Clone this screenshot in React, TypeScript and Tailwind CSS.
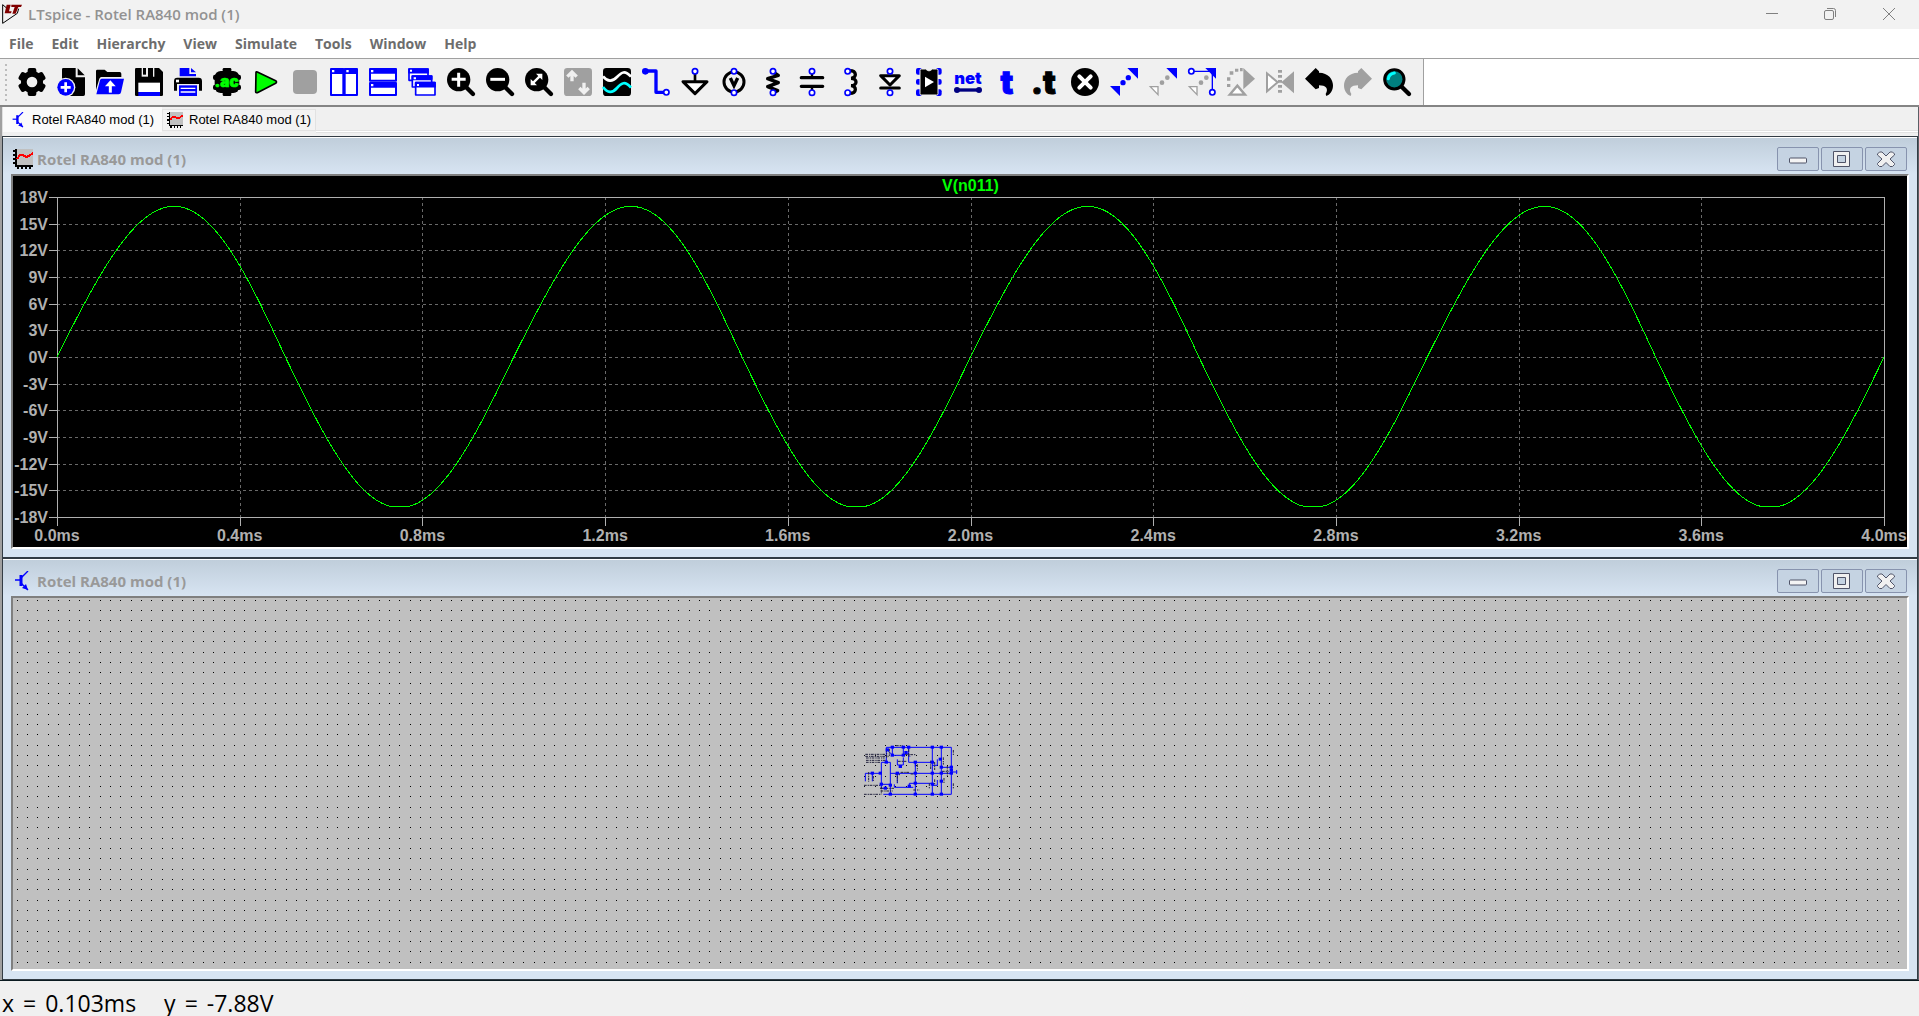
import { useLayoutEffect, useRef, useState, type ReactNode } from 'react';

const BLUE = '#0000ff';
const GRAY = '#a0a0a0';
const FACE = '#f0f0f0';

const MENUS = ['File', 'Edit', 'Hierarchy', 'View', 'Simulate', 'Tools', 'Window', 'Help'];

// tracks the pixel size of an element so drawings can be laid out 1:1
function useSize() {
    const ref = useRef<HTMLDivElement>(null);
    const [size, setSize] = useState({ w: 0, h: 0 });

    useLayoutEffect(() => {
        const el = ref.current;
        if (!el) return;
        const update = () => setSize({ w: el.clientWidth, h: el.clientHeight });
        update();
        const observer = new ResizeObserver(update);
        observer.observe(el);
        return () => observer.disconnect();
    }, []);

    return { ref, ...size };
}

function Pin({ x, y }: { x: number; y: number }) {
    return <circle cx={x} cy={y} r="8" fill="#fff" stroke={BLUE} strokeWidth="5" />;
}

function Lens({ children }: { children?: ReactNode }) {
    return (
        <>
            <path d="M54 54 L78 78" stroke="#000" strokeWidth="13" strokeLinecap="round" />
            <circle cx="35" cy="35" r="35" />
            <g stroke="#fff" strokeWidth="9" fill="none">{children}</g>
        </>
    );
}

// toolbar glyphs, all on an 84 x 84 grid
const TOOLS: { label: string; icon: ReactNode }[] = [
    {
        label: 'Settings',
        icon: (
            <>
                <circle cx="42" cy="42" r="33" />
                <rect x="29" y="0" width="26" height="84" rx="6" />
                <rect x="29" y="0" width="26" height="84" rx="6" transform="rotate(60 42 42)" />
                <rect x="29" y="0" width="26" height="84" rx="6" transform="rotate(120 42 42)" />
                <circle cx="42" cy="42" r="16" fill={FACE} />
            </>
        ),
    },
    {
        label: 'New Schematic',
        icon: (
            <>
                <path d="M19 0 H56 V28 H84 V79 Q84 84 79 84 H15 V4 Q15 0 19 0 Z" />
                <path d="M62 1 L83 22 H62 Z" />
                <circle cx="26" cy="58" r="29" fill={FACE} />
                <circle cx="26" cy="58" r="25" fill={BLUE} />
                <path d="M26 43 V73 M11 58 H41" stroke="#fff" strokeWidth="8" />
            </>
        ),
    },
    {
        label: 'Open',
        icon: (
            <>
                <path d="M4 5 H26 L34 12 H71 Q76 12 76 17 V27 H16 Q12 27 10 32 L0 66 V9 Q0 5 4 5 Z" />
                <path d="M17 32 H84 L75 73 Q74 79 68 79 H1 L12 37 Q13 32 17 32 Z" fill={BLUE} />
                <path d="M43 74 V50" stroke="#fff" strokeWidth="9" />
                <path d="M43 37 L27 55 H59 Z" fill="#fff" />
            </>
        ),
    },
    {
        label: 'Save',
        icon: (
            <>
                <path d="M4 0 H72 L84 12 V80 Q84 84 80 84 H4 Q0 84 0 80 V4 Q0 0 4 0 Z" />
                <path d="M20 0 H39 V26 H20 Z" fill={FACE} />
                <path d="M24 0 H33 V20 H24 Z" />
                <path d="M54 0 H58 V26 H54 Z" fill={FACE} />
                <path d="M10 44 H75 V72 H10 Z" fill="#fff" />
                <path d="M10 72 H75 V84 H10 Z" fill={BLUE} />
            </>
        ),
    },
    {
        label: 'Print',
        icon: (
            <>
                <path d="M17 0 H46 V18 H66 V25 H17 Z M51 0 L66 13 H51 Z" fill={BLUE} />
                <path d="M10 29 H74 Q84 29 84 39 V68 H0 V39 Q0 29 10 29 Z" />
                <rect x="6" y="35" width="9" height="8" fill="#fff" />
                <path d="M9 48 H75 V84 H9 Z" fill={FACE} />
                <path d="M15 52 H69 V84 H15 Z" fill={BLUE} />
                <path d="M20 61 H64 M20 72 H64" stroke="#fff" strokeWidth="4" />
            </>
        ),
    },
    {
        label: 'Configure Analysis',
        icon: (
            <>
                <rect x="5" y="9" width="74" height="66" rx="18" />
                <rect x="29" y="0" width="26" height="84" rx="4" />
                <rect x="0" y="20" width="84" height="16" rx="6" />
                <rect x="0" y="50" width="84" height="16" rx="6" />
                <text x="41" y="57" textAnchor="middle" fontSize="46" fontWeight="900" fill="#00ff00" stroke="#00ff00" strokeWidth="2" className="font-[Inter,sans-serif]">.ac</text>
            </>
        ),
    },
    {
        label: 'Run',
        icon: <path d="M12 13 Q12 10 16 12 L71 38 Q76 42 71 46 L16 74 Q11 75 11 71 Z" fill="#00ff00" stroke="#000" strokeWidth="5" strokeLinejoin="round" />,
    },
    { label: 'Stop', icon: <rect x="6" y="6" width="72" height="72" rx="12" fill={GRAY} /> },
    {
        label: 'Tile Vertically',
        icon: (
            <>
                <path d="M3 3 H40 V81 H3 Z M44 3 H81 V81 H44 Z" fill="#fff" stroke={BLUE} strokeWidth="6" strokeLinejoin="round" />
                <path d="M2 3 H82 V18 H2 Z" fill={BLUE} />
                <path d="M6 6 H13 V13 H6 Z M49 6 H56 V13 H49 Z" fill="#fff" />
            </>
        ),
    },
    {
        label: 'Tile Horizontally',
        icon: (
            <>
                <path d="M3 3 H81 V38 H3 Z M3 45 H81 V81 H3 Z" fill="#fff" stroke={BLUE} strokeWidth="6" strokeLinejoin="round" />
                <path d="M2 3 H82 V17 H2 Z M2 45 H82 V59 H2 Z" fill={BLUE} />
                <path d="M6 6 H13 V13 H6 Z M6 48 H13 V55 H6 Z" fill="#fff" />
            </>
        ),
    },
    {
        label: 'Cascade',
        icon: (
            <g stroke={BLUE} strokeWidth="5" fill="#fff" strokeLinejoin="round">
                <path d="M3 3 H60 V37 H3 Z" />
                <path d="M3 3 H60 V14 H3 Z" fill={BLUE} />
                <path d="M13 24 H71 V57 H13 Z" />
                <path d="M13 24 H71 V34 H13 Z" fill={BLUE} />
                <path d="M23 44 H81 V81 H23 Z" />
                <path d="M23 44 H81 V56 H23 Z" fill={BLUE} />
                <path d="M6 5 H12 V11 H6 Z M17 28 H24 V34 H17 Z M27 48 H33 V54 H27 Z" stroke="none" />
            </g>
        ),
    },
    { label: 'Zoom In', icon: <Lens><path d="M35 14 V56 M14 34 H56" /></Lens> },
    { label: 'Zoom Out', icon: <Lens><path d="M13 34 H57" /></Lens> },
    {
        label: 'Zoom to Fit',
        icon: (
            <Lens>
                <path d="M22 47 L47 22" strokeWidth="7" />
                <path d="M33 17 H52 V36 Z M17 33 V52 H36 Z" fill="#fff" stroke="none" />
            </Lens>
        ),
    },
    {
        label: 'Autorange',
        icon: (
            <>
                <rect width="84" height="84" rx="10" fill={GRAY} />
                <path d="M24 40 V14 M10 26 L24 12 L38 26 M60 44 V72 M46 60 L60 74 L74 60" stroke={FACE} strokeWidth="10" fill="none" />
            </>
        ),
    },
    {
        label: 'Waveforms',
        icon: (
            <>
                <rect width="84" height="84" rx="10" />
                <path d="M0 25 C14 42 28 42 42 27 S66 6 84 26" stroke="#fff" strokeWidth="8" fill="none" />
                <path d="M0 57 C14 76 28 76 42 60 S66 38 84 59" stroke="#00ffff" strokeWidth="8" fill="none" />
            </>
        ),
    },
    {
        label: 'Wire',
        icon: (
            <>
                <path d="M10 9 H42 V73 H66" stroke={BLUE} strokeWidth="10" fill="none" strokeLinejoin="round" />
                <circle cx="10" cy="10" r="10" fill={BLUE} />
                <Pin x={73} y={73} />
            </>
        ),
    },
    {
        label: 'Ground',
        icon: (
            <>
                <path d="M42 16 V40" stroke="#000" strokeWidth="8" />
                <path d="M6 41 H78 L42 77 Z" fill="#fff" stroke="#000" strokeWidth="9" strokeLinejoin="round" />
                <Pin x={42} y={10} />
            </>
        ),
    },
    {
        label: 'Voltage Source',
        icon: (
            <>
                <circle cx="42" cy="42" r="30" fill={FACE} stroke="#000" strokeWidth="9" />
                <path d="M31 30 L42 53 L53 30" fill="none" stroke="#000" strokeWidth="10" />
                <Pin x={42} y={10} />
                <Pin x={42} y={74} />
            </>
        ),
    },
    {
        label: 'Resistor',
        icon: (
            <>
                <path d="M42 12 L58 22 L26 32 L58 44 L26 56 L56 68 L42 74" fill="none" stroke="#000" strokeWidth="10" strokeLinejoin="round" />
                <Pin x={42} y={10} />
                <Pin x={42} y={74} />
            </>
        ),
    },
    {
        label: 'Capacitor',
        icon: (
            <>
                <path d="M10 29 H74 M10 55 H74" stroke="#000" strokeWidth="10" strokeLinecap="round" />
                <path d="M42 18 V26 M42 58 V66" stroke="#000" strokeWidth="7" />
                <Pin x={42} y={10} />
                <Pin x={42} y={74} />
            </>
        ),
    },
    {
        label: 'Inductor',
        icon: (
            <>
                <path d="M38 8 C60 8 60 30 42 31 C62 31 62 53 42 53 C60 54 60 76 38 76" fill="none" stroke="#000" strokeWidth="10" />
                <Pin x={32} y={10} />
                <Pin x={32} y={74} />
            </>
        ),
    },
    {
        label: 'Diode',
        icon: (
            <>
                <path d="M14 23 H70 L42 51 Z" fill="#fff" stroke="#000" strokeWidth="9" strokeLinejoin="round" />
                <path d="M14 60 H70" stroke="#000" strokeWidth="9" strokeLinecap="round" />
                <Pin x={42} y={10} />
                <Pin x={42} y={74} />
            </>
        ),
    },
    {
        label: 'Component',
        icon: (
            <>
                <g fill={BLUE}>
                    <rect x="3" y="0" width="18" height="20" rx="6" />
                    <rect x="62" y="0" width="18" height="20" rx="6" />
                    <rect x="3" y="33" width="18" height="17" rx="6" />
                    <rect x="62" y="33" width="18" height="17" rx="6" />
                    <rect x="3" y="64" width="18" height="20" rx="6" />
                    <rect x="62" y="64" width="18" height="20" rx="6" />
                </g>
                <path d="M15 7 Q15 3 19 3 H32 Q42 14 52 3 H65 Q69 3 69 7 V77 Q69 81 65 81 H19 Q15 81 15 77 Z" stroke={FACE} strokeWidth="3" />
                <path d="M30 26 V58 L57 42 Z" fill="#fff" />
            </>
        ),
    },
    {
        label: 'Net Name',
        icon: (
            <>
                <text x="42" y="49" textAnchor="middle" fontSize="50" fontWeight="900" fill={BLUE} className="font-[Inter,sans-serif]">net</text>
                <path d="M10 66 H74" stroke="#000080" strokeWidth="10" />
                <circle cx="9" cy="66" r="9" fill="#000080" />
                <circle cx="75" cy="66" r="9" fill="#000080" />
            </>
        ),
    },
    {
        label: 'Text',
        icon: <text x="42" y="77" textAnchor="middle" fontSize="96" fontWeight="900" fill={BLUE} stroke={BLUE} strokeWidth="3" className="font-[Inter,sans-serif]">t</text>,
    },
    {
        label: 'SPICE Directive',
        icon: <text x="34" y="77" textAnchor="middle" fontSize="96" fontWeight="900" stroke="#000" strokeWidth="3" className="font-[Inter,sans-serif]">.t</text>,
    },
    {
        label: 'Delete',
        icon: (
            <>
                <circle cx="42" cy="42" r="42" />
                <path d="M25 25 L59 59 M59 25 L25 59" stroke="#fff" strokeWidth="12" strokeLinecap="round" />
            </>
        ),
    },
    {
        label: 'Move',
        icon: (
            <g fill={BLUE}>
                <path d="M52 0 H84 V32 Z M0 54 H30 V84 Z" />
                <circle cx="39" cy="44" r="8" />
                <circle cx="55" cy="29" r="8" />
            </g>
        ),
    },
    {
        label: 'Drag',
        icon: (
            <>
                <path d="M52 0 H84 V32 Z" fill={BLUE} />
                <path d="M4 56 H27 V80 Z" fill="#fff" stroke={GRAY} strokeWidth="4" />
                <circle cx="39" cy="44" r="7" fill={GRAY} />
                <circle cx="55" cy="29" r="7" fill={GRAY} />
            </>
        ),
    },
    {
        label: 'Stretch',
        icon: (
            <>
                <path d="M12 10 H73 V70" stroke={BLUE} strokeWidth="4" fill="none" />
                <path d="M52 0 H84 V32 Z" fill={BLUE} />
                <path d="M4 56 H27 V80 Z" fill="#fff" stroke={GRAY} strokeWidth="4" />
                <circle cx="39" cy="44" r="7" fill={GRAY} />
                <circle cx="55" cy="29" r="7" fill={GRAY} />
                <Pin x={10} y={10} />
                <Pin x={73} y={73} />
            </>
        ),
    },
    {
        label: 'Rotate',
        icon: (
            <>
                <path d="M49 0 L84 32 L49 64 Z" fill={GRAY} />
                <path d="M8 80 L31 53 L54 80 Z" fill="#fff" stroke={GRAY} strokeWidth="7" />
                <path d="M0 48 H10 V57 H0 Z M0 28 H10 V38 H0 Z M8 10 H19 V20 H8 Z M24 2 H34 V11 H24 Z M39 0 H47 V10 H39 Z" fill={GRAY} />
            </>
        ),
    },
    {
        label: 'Mirror',
        icon: (
            <>
                <path d="M84 10 V76 L46 43 Z" fill={GRAY} />
                <path d="M3 16 V70 L35 43 Z" fill="#fff" stroke={GRAY} strokeWidth="6" />
                <path d="M42 6 V80" stroke={GRAY} strokeWidth="12" strokeDasharray="8 7" />
            </>
        ),
    },
    {
        label: 'Undo',
        icon: <path d="M0 32 L32 0 L42 10 V14 C70 14 84 34 84 52 C84 68 76 80 64 84 L62 78 C72 62 62 52 42 52 V60 L32 64 Z" />,
    },
    {
        label: 'Redo',
        icon: <path d="M84 32 L52 0 L42 10 V14 C14 14 0 34 0 52 C0 68 8 80 20 84 L22 78 C12 62 22 52 42 52 V60 L52 64 Z" fill={GRAY} />,
    },
    {
        label: 'Search',
        icon: (
            <>
                <path d="M56 56 L78 78" stroke="#000" strokeWidth="13" strokeLinecap="round" />
                <circle cx="34" cy="34" r="29" fill="#008080" stroke="#000" strokeWidth="9" />
                <path d="M16 32 Q18 18 34 15" stroke="#00ffff" strokeWidth="9" fill="none" strokeLinecap="round" />
            </>
        ),
    },
];

function WaveIcon({ className }: { className: string }) {
    return (
        <svg viewBox="0 0 20 20" className={className} aria-hidden="true" shapeRendering="crispEdges">
            <path d="M4 0 H20 V16 H4 Z" fill="#c0c0c0" />
            <path d="M3 0 V17 H20" stroke="#000" strokeWidth="2" fill="none" />
            <path d="M0 2 H3 M0 6 H3 M0 10 H3 M0 14 H3 M5 17 V20 M9 17 V20 M13 17 V20 M17 17 V20" stroke="#000" strokeWidth="1.5" />
            <path d="M4 10 L7 6 H10 L13 8 L16 7 L20 4" stroke="#f00" strokeWidth="2" fill="none" />
        </svg>
    );
}

function TransistorIcon({ className }: { className: string }) {
    return (
        <svg viewBox="0 0 20 20" className={className} aria-hidden="true">
            <path d="M2 9 H8" stroke={BLUE} strokeWidth="1.5" />
            <path d="M8 4 V15" stroke={BLUE} strokeWidth="3" />
            <path d="M8 7 L15 0 M8 12 L15 19" stroke={BLUE} strokeWidth="1.4" />
            <path d="M15 19 L9 17 L13 13 Z" fill={BLUE} />
        </svg>
    );
}

function CaptionButton({ label, children }: { label: string; children: ReactNode }) {
    return (
        <button aria-label={label} className="flex h-6 w-[42px] items-center justify-center rounded-xs border border-[#8793ae] bg-[#c5d3e2]">
            <svg viewBox="0 0 20 18" className="h-[18px] w-5">{children}</svg>
        </button>
    );
}

function MdiWindow({ title, icon, children }: { title: string; icon: ReactNode; children: ReactNode }) {
    return (
        <section className="flex min-h-0 flex-1 flex-col border-y border-[#333c44] bg-[#d7e4f2]">
            <header className="flex h-[37px] shrink-0 items-center border-t border-white bg-linear-to-b from-[#c0cedb] to-[#d7e4f2] px-[10px] pt-[6px]">
                {icon}
                <h2 className="ml-1 flex-1 text-[15px] leading-5 font-bold text-[#999]">{title}</h2>
                <div className="flex gap-[2px]">
                    <CaptionButton label="Minimize">
                        <rect x="1.500" y="8" width="17" height="5" rx="1" fill="#f4f4f4" stroke="#505468" />
                    </CaptionButton>
                    <CaptionButton label="Maximize">
                        <path d="M1.500 1.500 H17.500 V16.500 H1.500 Z M5.500 5.500 V12.500 H13.500 V5.500 Z" fill="#f0f0f0" fillRule="evenodd" stroke="#505468" />
                    </CaptionButton>
                    <CaptionButton label="Close">
                        <path d="M1.500 4 L3.500 2 H6 L10 6 L14 2 H16.500 L18.500 4 V5 L14 9 L18.500 13.500 V14.500 L16.500 16.500 H14 L10 12.500 L6 16.500 H3.500 L1.500 14.500 V13.500 L6 9 L1.500 5 Z" fill="#f0f0f0" stroke="#505468" />
                    </CaptionButton>
                </div>
            </header>
            <div className="mr-[8px] mb-[8px] ml-[8px] flex min-h-0 flex-1 border-2 border-t-[#7f7f7f] border-r-white border-b-white border-l-[#7f7f7f]">
                {children}
            </div>
        </section>
    );
}

function WaveformPlot() {
    const { ref, w, h } = useSize();
    const left = 44;
    const right = w - 23;
    const top = 21;
    const bottom = h - 30;
    const stepX = (right - left) / 10;
    const stepY = (bottom - top) / 12;
    const mid = (top + bottom) / 2;

    const points: string[] = [];
    for (let i = 0; i <= 400; i++) {
        const phase = (i / 100) * 2 * Math.PI;
        // positive crests lag a little, negative ones clip
        const lag = 0.04 * Math.max(0, Math.sin(phase));
        const v = Math.max(-16.8, 16.95 * Math.sin(phase - lag));
        points.push(`${left + ((right - left) * i) / 400},${mid - (v / 3) * stepY}`);
    }

    const cols = Array.from({ length: 11 }, (_, i) => i);
    const rows = Array.from({ length: 13 }, (_, i) => i);

    return (
        <div ref={ref} className="relative min-w-0 flex-1 bg-black">
            {w > 0 && (
                <svg width={w} height={h} className="absolute inset-0 font-['Liberation_Sans',Arial,sans-serif] text-[16px] font-bold">
                    <g shapeRendering="crispEdges" stroke="#b0b0b0" fill="none">
                        {cols.slice(1, -1).map(i => (
                            <path key={i} d={`M${Math.round(left + i * stepX) + 0.5} ${top} V${bottom}`} stroke="#696969" strokeDasharray="3 3" />
                        ))}
                        {rows.slice(1, -1).map(i => (
                            <path key={i} d={`M${left} ${Math.round(top + i * stepY) + 0.5} H${right}`} stroke="#696969" strokeDasharray="3 3" />
                        ))}
                        {cols.map(i => (
                            <path key={i} d={`M${Math.round(left + i * stepX) + 0.5} ${bottom} v9`} />
                        ))}
                        {rows.map(i => (
                            <path key={i} d={`M${left - 8} ${Math.round(top + i * stepY) + 0.5} h8`} />
                        ))}
                        <rect x={left + 0.5} y={top + 0.5} width={right - left} height={bottom - top} />
                        <polyline points={points.join(' ')} stroke="#00ff00" />
                    </g>
                    <g fill="#b0b0b0">
                        {cols.map(i => (
                            <text key={i} x={left + i * stepX} y={h - 6} textAnchor="middle">{`${(i * 0.4).toFixed(1)}ms`}</text>
                        ))}
                        {rows.map(i => (
                            <text key={i} x={left - 9} y={top + i * stepY + 6} textAnchor="end">{`${18 - i * 3}V`}</text>
                        ))}
                    </g>
                    <text x={(left + right) / 2} y="15" textAnchor="middle" fill="#00ff00">V(n011)</text>
                </svg>
            )}
        </div>
    );
}

const JUNCTIONS = [
    [127, 52], [160, 52], [176, 52], [247, 52], [274, 52], [109, 97], [151, 110], [196, 97], [67, 130], [91, 130],
    [142, 130], [196, 130], [247, 130], [274, 130], [94, 163], [121, 166], [196, 160], [178, 169], [247, 97], [247, 163],
    [121, 193], [196, 193], [247, 193], [274, 193], [127, 76], [160, 76], [274, 112], [304, 112], [304, 130], [304, 121],
    [106, 175], [274, 154], [271, 88], [112, 60], [168, 68],
];

// zoomed-out amplifier circuit
function Circuit() {
    return (
        <g>
            <g stroke={BLUE} fill="none" strokeWidth="3">
                <path d="M109 97 V52 H304 V193 H100" />
                <path d="M247 52 V193 M274 52 V193 M196 97 V193" />
                <path d="M94 163 V97 H121 V163 H94 M121 166 V193 M127 52 V76 H160 V52" />
                <path d="M176 52 V97 H247 M142 88 V105 H160 V82" />
                <path d="M46 154 V130 H91 M67 130 V154 M121 130 H304" />
                <path d="M133 163 V172 H190 M178 169 V160 H247 M94 163 V175 H112" />
                <path d="M274 112 H304 M304 126 H322 M320 120 V132 M262 88 V106 H247 M262 150 V166 H247" />
                <path d="M142 130 V160 M196 97 V110 M112 60 L124 72 M168 68 L180 80" />
            </g>
            <g stroke="#20203c" fill="none" strokeWidth="3" strokeDasharray="8 3 4 2">
                <path d="M46 73 H108 M46 79 H116 M48 84 H104 M48 91 H110 M48 97 H90" />
                <path d="M42 166 H92 M42 193 H94 M138 47 H158 M164 74 H198 M144 94 H172" />
                <path d="M152 127 H178 M136 134 H150 M90 175 H134 M92 183 H128 M190 180 H208 M238 160 V175" />
                <path d="M110 58 V84 M118 56 V78 M176 58 V80 M94 170 V190 M142 138 V158 M202 103 V122" />
                <path d="M242 92 V118 M254 96 V120 M280 82 V104 M254 148 V166 M282 144 V160 M292 108 V138" />
                <path d="M310 60 V76 M310 160 V176 M56 126 V156 M70 138 V154 M182 132 H192 M276 124 H296" />
            </g>
            <g fill={BLUE}>
                {JUNCTIONS.map(([x, y]) => (
                    <rect key={`${x}-${y}`} x={x - 5} y={y - 5} width="10" height="9" />
                ))}
            </g>
        </g>
    );
}

function SchematicCanvas() {
    const { ref, w, h } = useSize();
    const pitch = 10.334;

    let dots = '';
    for (let y = 2.33; y < h; y += pitch) {
        for (let x = 4.33; x < w - 4; x += pitch) {
            dots += `M${Math.floor(x)} ${Math.floor(y)}h1v1h-1z`;
        }
    }

    return (
        <div ref={ref} className="relative min-w-0 flex-1 bg-[#c0c0c0]">
            {w > 0 && (
                <svg width={w} height={h} className="absolute inset-0">
                    <path d={dots} fill="#000" shapeRendering="crispEdges" />
                    <g transform={`translate(${Math.round(w / 2) - 110} ${Math.round(h / 2) - 54}) scale(0.3333)`}>
                        <Circuit />
                    </g>
                </svg>
            )}
        </div>
    );
}

function Readout({ axis, value }: { axis: string; value: string }) {
    return (
        <p className="flex gap-[9px]">
            <span>{axis}</span>
            <span>=</span>
            <span>{value}</span>
        </p>
    );
}

export default function App() {
    return (
        <div className="flex h-screen flex-col overflow-hidden bg-[#f0f0f0] font-['Open_Sans','Noto_Sans',sans-serif]">
            <header className="flex h-[29px] shrink-0 items-center bg-[#f2f2f2] pb-[2px] pl-[2px]">
                <svg viewBox="0 0 60 60" className="h-5 w-5" aria-hidden="true">
                    <path d="M2 2 V58 L46 28 L50 14" fill="none" stroke="#000" strokeWidth="3" />
                    <path d="M2 2 L16 14" stroke="#000" strokeWidth="3" />
                    <path d="M14 2 H26 L21 22 H29 L27 28 H8 Z M28 2 H60 L57 9 H49 L41 29 H31 L38 9 H28 Z" fill="#800000" />
                </svg>
                <h1 className="ml-[6px] flex-1 text-[15px] leading-5 font-semibold text-[#929292]">LTspice - Rotel RA840 mod (1)</h1>
                <div className="flex text-[#808080]">
                    <button aria-label="Minimize" className="flex h-[27px] w-[58px] items-center justify-center">
                        <svg viewBox="0 0 12 12" className="h-3 w-3" stroke="currentColor"><path d="M0 5.500 H12" /></svg>
                    </button>
                    <button aria-label="Restore" className="flex h-[27px] w-[58px] items-center justify-center">
                        <svg viewBox="0 0 12 12" className="h-3 w-3" stroke="currentColor" fill="none">
                            <rect x="0.500" y="2.500" width="9" height="9" rx="1.500" />
                            <path d="M3 0.500 H9.500 Q11.500 0.500 11.500 2.500 V9" />
                        </svg>
                    </button>
                    <button aria-label="Close" className="flex h-[27px] w-[60px] items-center justify-center">
                        <svg viewBox="0 0 12 12" className="h-3 w-3" stroke="currentColor"><path d="M0 0 L12 12 M12 0 L0 12" /></svg>
                    </button>
                </div>
            </header>

            <nav className="flex h-[30px] shrink-0 items-center gap-[18px] border-b border-[#a0a0a0] bg-white pl-[9px] text-[14px] leading-5 font-bold text-[#6d6d6d]">
                {MENUS.map(menu => (
                    <button key={menu}>{menu}</button>
                ))}
            </nav>

            <div className="flex h-12 shrink-0 border-b-2 border-[#848484] bg-white">
                <div className="flex items-center border-r border-r-[#a0a0a0] bg-[#f0f0f0] pr-[7px] pl-[5px]">
                    <div className="mr-[1px] flex w-[6px] flex-col gap-[3px]">
                        {Array.from({ length: 8 }, (_, i) => (
                            <span key={i} className="h-[2px] w-[2px] bg-[#bcbcbc]" />
                        ))}
                    </div>
                    {TOOLS.map(tool => (
                        <button key={tool.label} aria-label={tool.label} className="flex h-10 w-[39px] items-center justify-center">
                            <svg viewBox="0 0 84 84" className="h-7 w-7 overflow-visible">{tool.icon}</svg>
                        </button>
                    ))}
                </div>
            </div>

            <div className="flex min-h-0 flex-1 flex-col border-r border-l-2 border-r-[#5a6066] border-l-[#a0a0a0]">
                <div className="flex h-[29px] shrink-0 items-start border-l border-[#e0e0e0] font-['Liberation_Sans',Arial,sans-serif] text-[13px] leading-4 whitespace-nowrap text-black">
                    <button className="flex h-[25px] w-[159px] items-center bg-[#fafafa] pl-[8px]">
                        <TransistorIcon className="mr-[5px] h-4 w-4 shrink-0" />
                        Rotel RA840 mod (1)
                    </button>
                    <button className="mt-[2px] flex h-[22px] w-[154px] items-center border border-[#e2e2e2] bg-[#f3f3f3] pl-1">
                        <WaveIcon className="mr-[6px] h-4 w-4 shrink-0" />
                        Rotel RA840 mod (1)
                    </button>
                    <div className="mt-[23px] h-[3px] flex-1 border-y border-[#e2e2e2] bg-white" />
                </div>
                <main className="flex min-h-0 flex-1 flex-col border-r border-l border-[#333c44]">
                    <MdiWindow title="Rotel RA840 mod (1)" icon={<WaveIcon className="h-5 w-5" />}>
                        <WaveformPlot />
                    </MdiWindow>
                    <MdiWindow title="Rotel RA840 mod (1)" icon={<TransistorIcon className="h-5 w-5" />}>
                        <SchematicCanvas />
                    </MdiWindow>
                </main>
            </div>

            <footer className="flex h-9 shrink-0 items-end gap-7 border-t border-[#0a1a20] bg-[#f0f0f0] pb-[1px] pl-[2px] text-[23px] leading-6 font-medium text-black">
                <Readout axis="x" value="0.103ms" />
                <Readout axis="y" value="-7.88V" />
            </footer>
        </div>
    );
}
